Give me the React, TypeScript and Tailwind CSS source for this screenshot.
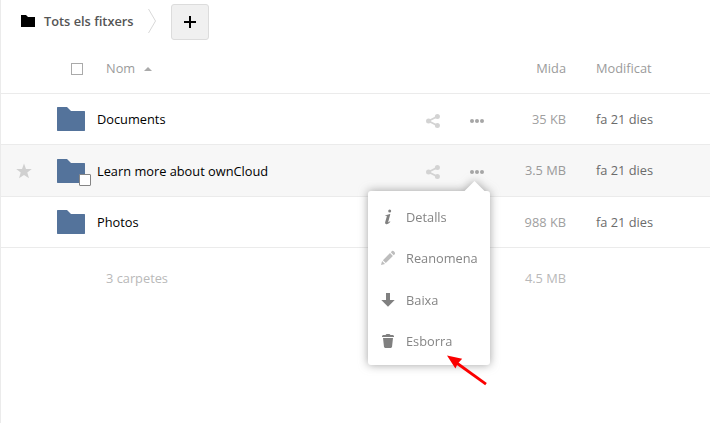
import type { ReactNode } from 'react';

type Entry = { name: string; size: string; sizeColor: string; height: string; active?: boolean };

const entries: Entry[] = [
  { name: 'Documents', size: '35 KB', sizeColor: 'text-[#a0a0a0]', height: 'h-[51px]' },
  { name: 'Learn more about ownCloud', size: '3.5 MB', sizeColor: 'text-[#9a9a9a]', height: 'h-[52px] pt-px', active: true },
  { name: 'Photos', size: '988 KB', sizeColor: 'text-[#a0a0a0]', height: 'h-[51px]' },
];

function Folder() {
  return (
    <svg className="block" width="28" height="24" viewBox="0 0 28 24" fill="#54739b">
      <path d="M.5 0H10L14 4H27.5L28 4.5V23.5L27.5 24H.5L0 23.5V.5Z" />
    </svg>
  );
}

function Share() {
  return (
    <svg className="block" width="14" height="14" viewBox="0 0 14 14" fill="#d3d3d3">
      <path d="M11.3 2.5L2.5 7L11.3 11.5" fill="none" stroke="#d3d3d3" strokeWidth="1.8" />
      <circle cx="11.4" cy="2.5" r="2.5" />
      <circle cx="2.5" cy="7" r="2.5" />
      <circle cx="11.4" cy="11.5" r="2.5" />
    </svg>
  );
}

function Dots() {
  return (
    <svg className="block" width="14" height="4" viewBox="0 0 14 4" fill="#a6a6a6">
      <circle cx="2" cy="2" r="2" />
      <circle cx="7" cy="2" r="2" />
      <circle cx="12" cy="2" r="2" />
    </svg>
  );
}

function MenuItem({ icon, label }: { icon: ReactNode; label: string }) {
  return (
    <li className="flex h-[41.5px] items-center">
      <span className="ml-3 flex w-4 justify-center">{icon}</span>
      <span className="ml-[10px] whitespace-nowrap">{label}</span>
    </li>
  );
}

function ActionsMenu() {
  return (
    <div className="absolute left-[367px] top-[46px] z-10 h-[174px] w-[122px] rounded-[3px] bg-white pt-[5px] text-[#858585] [filter:drop-shadow(0_0_5px_rgba(110,110,110,0.65))]">
      <svg className="absolute -top-[10px] left-[96px]" width="21" height="11" viewBox="0 0 21 11" fill="#fff">
        <path d="M0 10.5L10.5 0L21 10.5V11H0Z" />
      </svg>
      <ul>
        <MenuItem
          label="Detalls"
          icon={
            <svg width="16" height="16" viewBox="0 0 16 16" fill="#808080">
              <circle cx="9.7" cy="1.9" r="1.5" />
              <path d="M5.3 6.2C6.9 6 8.2 5.6 9.9 4.9L10.3 5.2L8.2 12.9C8.1 13.5 8.6 13.5 9.9 12.3L10.4 12.8C9 14.6 7.5 15.4 6.2 15.2C5.2 15 4.9 14.2 5.2 13.1L6.8 7.6C7 6.9 6.5 6.7 5.3 6.8Z" />
            </svg>
          }
        />
        <MenuItem
          label="Reanomena"
          icon={
            <svg width="16" height="16" viewBox="0 0 16 16" fill="#bdbdbd">
              <path d="M12 1Q13 .5 14.3 1.7Q15.5 3 15 4L13.7 5.2L10.8 2.3ZM10 3.1L12.9 6L5.8 13.1L2.9 10.2ZM2.1 11L5 13.9L1 15Z" />
            </svg>
          }
        />
        <MenuItem
          label="Baixa"
          icon={
            <svg width="16" height="16" viewBox="0 0 16 16" fill="#808080">
              <path d="M6 1H10V8H14.7L8 14.7L1.3 8H6Z" />
            </svg>
          }
        />
        <MenuItem
          label="Esborra"
          icon={
            <svg width="16" height="16" viewBox="0 0 16 16" fill="#808080">
              <path d="M6.5 1H9.5L10.5 2H13L14 3V4H2V3L3 2H5.5ZM3 5H13L12 14L11 15H5L4 14Z" />
            </svg>
          }
        />
      </ul>
    </div>
  );
}

function FileRow({ entry }: { entry: Entry }) {
  return (
    <div className={`relative flex items-center border-b border-[#ebebeb] ${entry.height} ${entry.active ? 'bg-[#f7f7f7]' : 'bg-white'}`}>
      <div className="flex w-[56px] pl-[15px]">
        {entry.active && (
          <svg width="16" height="16" viewBox="0 0 16 16" fill="#d0d0d0">
            <path d="M8 .5L10 6H15.8L11.3 9.5L13 15.2L8 12L3 15.2L4.7 9.5L.2 6H6Z" />
          </svg>
        )}
      </div>
      <div className="relative w-[28px]">
        <Folder />
        {entry.active && <span className="absolute left-[22px] top-[15px] h-3 w-3 rounded-[1px] border border-[#858585] bg-white" />}
      </div>
      <span className="ml-3 w-[329px] text-black">{entry.name}</span>
      <div className={`flex flex-1 items-center ${entry.active ? 'mb-[2px]' : ''}`}>
        <div className="mt-1 w-[44px]"><Share /></div>
        <div className="mt-1 w-[14px]"><Dots /></div>
        <span className={`w-[82px] text-right ${entry.sizeColor}`}>{entry.size}</span>
        <span className="ml-[30px] text-[#6b6b6b]">fa 21 dies</span>
      </div>
      {entry.active && <ActionsMenu />}
    </div>
  );
}

export default function App() {
  return (
    <main className="relative h-[423px] w-[710px] overflow-hidden border-l border-[#ebebeb] bg-white font-['Open_Sans',sans-serif] text-[12.8px] leading-[18px]">
      <nav className="flex h-[44px] items-center">
        <svg className="ml-5 mt-[-2px]" width="14" height="12" viewBox="0 0 14 12">
          <path d="M0 0H5L7 2H14V12H0Z" />
        </svg>
        <span className="mb-[2px] ml-[9px] w-[104px] font-semibold text-[#555]">Tots els fitxers</span>
        <svg className="mb-[2px]" width="8" height="26" viewBox="0 0 8 26" fill="none" stroke="#d8d8d8">
          <path d="M.5 1L7.5 13L.5 25" />
        </svg>
        <button className="ml-[15px] flex h-9 w-[38px] items-center justify-center rounded-[3px] border border-[#dcdcdc] bg-[#f0f0f0]">
          <svg width="12" height="12" viewBox="0 0 12 12">
            <path d="M5 0H7V5H12V7H7V12H5V7H0V5H5Z" />
          </svg>
        </button>
      </nav>
      <header className="flex h-[50px] items-center border-b border-[#ebebeb] text-[#9b9b9b]">
        <span className="ml-[70px] h-3 w-3 border border-[#aaa]" />
        <span className="mb-[2px] ml-[23px]">Nom</span>
        <svg className="ml-[9px]" width="8" height="4" viewBox="0 0 8 4" fill="#aaa">
          <path d="M0 4L4 0L8 4Z" />
        </svg>
        <span className="mb-[2px] ml-auto">Mida</span>
        <span className="mb-[2px] ml-[30px] w-[114px]">Modificat</span>
      </header>
      {entries.map((entry) => <FileRow key={entry.name} entry={entry} />)}
      <footer className="flex h-[60px] items-center text-[#b9b9b9]">
        <span className="ml-[105px] w-[300px]">3 carpetes</span>
        <span className="w-[160px] text-right">4.5 MB</span>
      </footer>
      <svg className="absolute left-[444px] top-[354px] z-20" width="44" height="34" viewBox="0 0 44 34">
        <path d="M11 8.5L41 30.2" stroke="#fb0000" strokeWidth="2.8" />
        <path d="M2 1.6L17.2 4.8L12.8 9.5L10.4 14.6Z" fill="#fb0000" />
      </svg>
    </main>
  );
}
